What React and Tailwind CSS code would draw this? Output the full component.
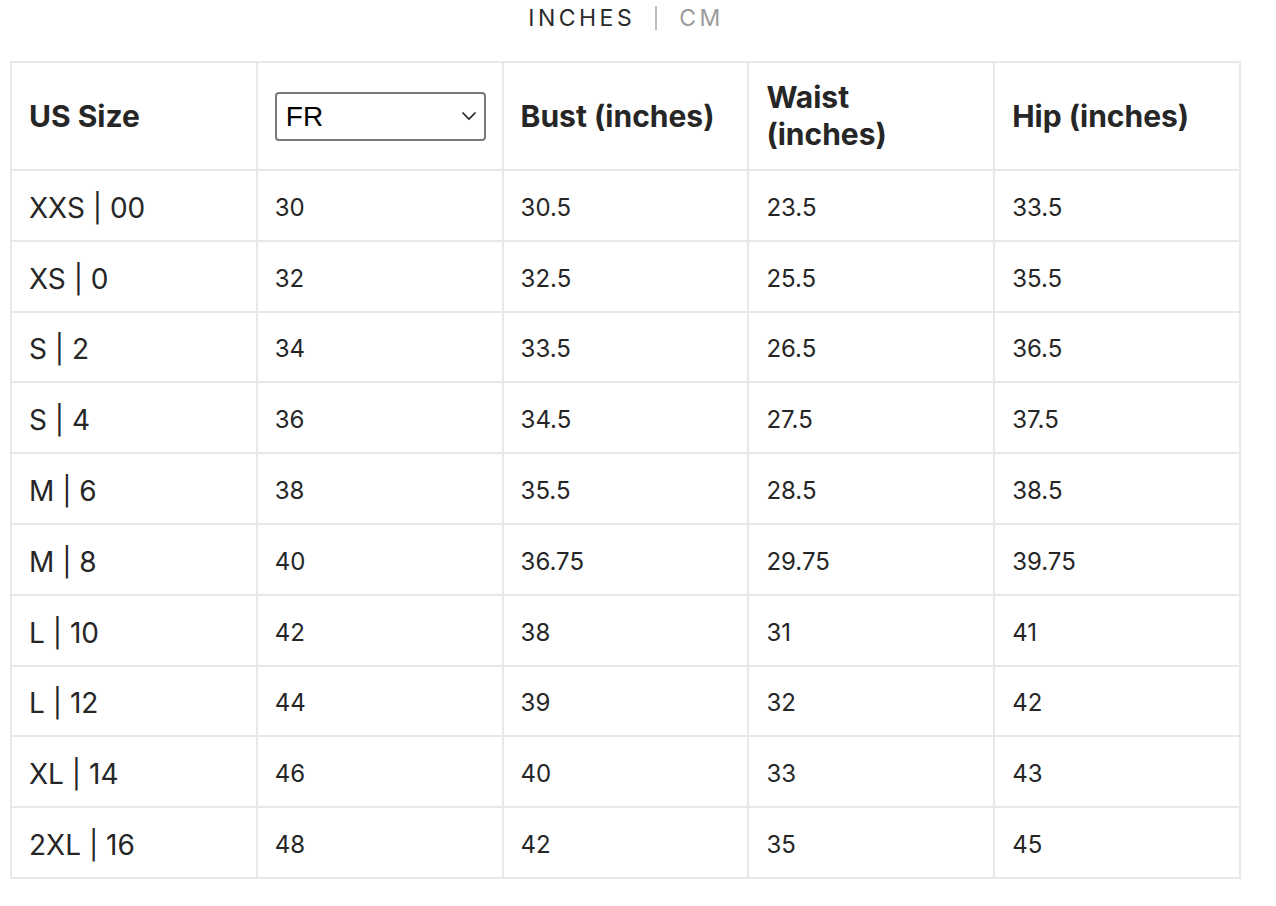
const ROWS = [
  ['XXS | 00', '30', '30.5', '23.5', '33.5'],
  ['XS | 0', '32', '32.5', '25.5', '35.5'],
  ['S | 2', '34', '33.5', '26.5', '36.5'],
  ['S | 4', '36', '34.5', '27.5', '37.5'],
  ['M | 6', '38', '35.5', '28.5', '38.5'],
  ['M | 8', '40', '36.75', '29.75', '39.75'],
  ['L | 10', '42', '38', '31', '41'],
  ['L | 12', '44', '39', '32', '42'],
  ['XL | 14', '46', '40', '33', '43'],
  ['2XL | 16', '48', '42', '35', '45'],
];

const cell = 'border-2 border-[#e8e8e8] px-[17px] align-middle text-left';

export default function App() {
  return (
    <div className="min-h-screen bg-white text-[#262626] font-['Inter',sans-serif]">
      {/* unit toggle */}
      <div className="flex justify-center pt-[4px] pr-[24px]">
        <div className="flex items-center text-[23px] tracking-[3.5px] leading-[28px]">
          <span className="text-[#2b2b2b]">INCHES</span>
          <span className="ml-[20px] mr-[22px] h-[24px] w-[2px] bg-[#bdbdbd]" />
          <span className="text-[#9b9b9b]">CM</span>
        </div>
      </div>

      <table className="mt-[29px] ml-[10px] w-[1231px] table-fixed border-collapse">
        <thead>
          <tr className="h-[108px] text-[30px] font-bold leading-[37px]">
            <th className={cell}>US Size</th>
            <th className={cell}>
              <div className="relative w-[211px]">
                <select className="h-[49px] w-full appearance-none rounded-[4px] border-2 border-[#7a7a7a] bg-white pl-[9px] font-['Liberation_Sans',Arial,sans-serif] text-[28px] font-normal text-black">
                  <option>FR</option>
                  <option>IT</option>
                  <option>UK</option>
                </select>
                <svg className="pointer-events-none absolute right-[9px] top-[19px]" width="16" height="10" viewBox="0 0 16 10" fill="none" stroke="#222" strokeWidth="1.6">
                  <path d="M1.5 1.5 L8 8 L14.5 1.5" />
                </svg>
              </div>
            </th>
            <th className={cell}>Bust (inches)</th>
            <th className={cell}>
              Waist
              <br />
              (inches)
            </th>
            <th className={cell}>Hip (inches)</th>
          </tr>
        </thead>
        <tbody>
          {ROWS.map((r) => (
            <tr key={r[0]} className="h-[70.8px]">
              <td className={`${cell} pt-[5px] text-[28px]`}>{r[0]}</td>
              {r.slice(1).map((v, i) => (
                <td key={i} className={`${cell} pt-[5px] text-[24px]`}>
                  {v}
                </td>
              ))}
            </tr>
          ))}
        </tbody>
      </table>
    </div>
  );
}
